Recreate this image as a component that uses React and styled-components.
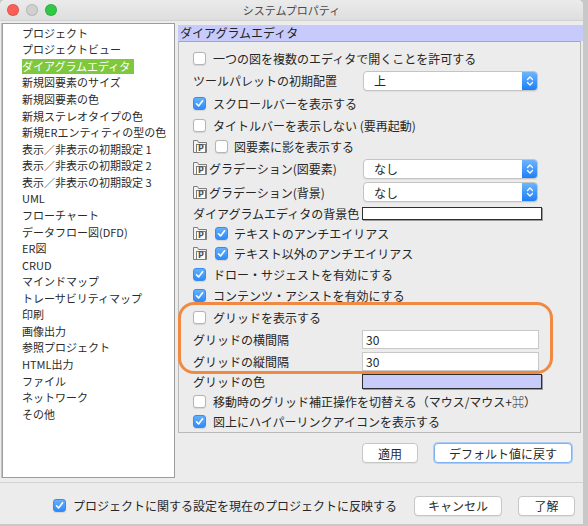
import React from "react";
import styled, { createGlobalStyle } from "styled-components";

const GlobalStyle = createGlobalStyle`
  html, body {
    margin: 0;
    padding: 0;
    background: #c8c8c8;
  }
  body {
    font-family: "Noto Sans CJK JP", "Noto Sans", sans-serif;
    color: #262626;
  }
  * {
    box-sizing: border-box;
  }
`;

const Window = styled.div`
  position: relative;
  width: 583px;
  height: 524px;
  background: #ececec;
  border-radius: 5px 5px 0 0;
  overflow: hidden;
  display: flex;
  flex-direction: column;
  box-shadow: 0 2px 0 #4f4f4f;
`;

const TitleBar = styled.div`
  height: 21px;
  flex: 0 0 auto;
  display: grid;
  grid-template-columns: 1fr auto 1fr;
  align-items: center;
  background: linear-gradient(#ebebeb, #dedede);
  border-bottom: 1px solid #d2d2d2;
`;

const Lights = styled.div`
  display: flex;
  gap: 7px;
  padding-left: 7px;
`;

const Light = styled.span`
  width: 12px;
  height: 12px;
  border-radius: 50%;
  background: ${(p) => p.$color};
  border: 0.5px solid rgba(0, 0, 0, 0.12);
`;

const Title = styled.div`
  font-size: 11px;
  color: #4a4a4a;
  line-height: 1;
`;

const Main = styled.div`
  height: 461px;
  flex: 0 0 auto;
  display: flex;
  gap: 3px;
  padding-left: 2px;
`;

const List = styled.div`
  width: 173px;
  height: 455px;
  margin-top: 2px;
  background: #fff;
  border: 1px solid #9c9c9c;
  box-shadow: -1px 0 0 #c4c4c4;
  padding-top: 1px;
`;

const Item = styled.div`
  height: 16.57px;
  display: flex;
  align-items: center;
  padding-left: 19px;
  font-size: 11px;
  color: #2a2a2a;
`;

const ItemText = styled.span`
  line-height: 15px;
  padding-right: 4px;
  background: ${(p) => (p.$selected ? "#7fc83e" : "transparent")};
  color: ${(p) => (p.$selected ? "#fff" : "inherit")};
`;

const Panel = styled.div`
  flex: 1;
  display: flex;
  flex-direction: column;
  padding-top: 4px;
`;

const PanelHeader = styled.div`
  height: 16px;
  background: #c7cbfb;
  font-size: 12px;
  line-height: 16px;
  padding-left: 2px;
  color: #222;
`;

const Content = styled.div`
  height: 392px;
  margin-right: 2px;
  border: 1px solid #b9b9b9;
  border-top-color: #a8a8a8;
  padding: 6px 0 0 14px;
  display: flex;
  flex-direction: column;
  font-size: 12px;
`;

const Row = styled.div`
  height: ${(p) => p.$h}px;
  display: flex;
  align-items: center;
  gap: ${(p) => p.$gap ?? 7}px;
  white-space: nowrap;
`;

const FieldRow = styled.div`
  height: ${(p) => p.$h}px;
  display: grid;
  grid-template-columns: 169px auto;
  align-items: center;
  white-space: nowrap;
`;

const Lead = styled.div`
  display: flex;
  align-items: center;
  gap: 2px;
`;

const Box = styled.span`
  width: 13px;
  height: 13px;
  flex: 0 0 auto;
  border-radius: 3px;
  display: inline-flex;
  align-items: center;
  justify-content: center;
  background: ${(p) => (p.$on ? "linear-gradient(#62b1fd, #2f8bf8)" : "#fff")};
  border: 1px solid ${(p) => (p.$on ? "#3a8bf0" : "#b5b5b5")};
  box-shadow: 0 0.5px 1px rgba(0, 0, 0, 0.1);
`;

const SelectBox = styled.div`
  width: 175px;
  height: 20px;
  margin-left: 1px;
  display: flex;
  background: #fff;
  border: 1px solid #c4c4c4;
  border-radius: 4px;
  overflow: hidden;
  box-shadow: 0 1px 1px rgba(0, 0, 0, 0.06);
`;

const SelectText = styled.div`
  flex: 1;
  padding-left: 10px;
  font-size: 12px;
  display: flex;
  align-items: center;
`;

const SelectArrow = styled.div`
  width: 15px;
  background: linear-gradient(#6db5fd, #1d7ff7);
  display: flex;
  align-items: center;
  justify-content: center;
`;

const Swatch = styled.div`
  width: 180px;
  height: ${(p) => p.$tall ? 15 : 13}px;
  background: ${(p) => p.$color};
  border: 1px solid #2e2e2e;
  box-shadow: 1px 1px 0 #9a9a9a;
`;

const TextInput = styled.div`
  width: 177px;
  height: 19px;
  background: #fff;
  border: 1px solid #c8c8c8;
  font-size: 12px;
  display: flex;
  align-items: center;
  padding-left: 3px;
`;

const ButtonRow = styled.div`
  display: flex;
  justify-content: flex-end;
  gap: 16px;
  margin-top: 10px;
  padding-right: 11px;
`;

const Button = styled.div`
  width: ${(p) => p.$w}px;
  height: 20px;
  display: flex;
  align-items: center;
  justify-content: center;
  font-size: 12px;
  background: #fff;
  border: 1px solid ${(p) => (p.$focus ? "#80b1f1" : "#c6c6c6")};
  box-shadow: ${(p) => (p.$focus ? "0 0 0 1px #a9cbf6" : "0 1px 0 rgba(0,0,0,0.05)")};
  border-radius: 4px;
  color: #2a2a2a;
`;

const Separator = styled.div`
  border-top: 1px solid #d3d3d3;
`;

const Footer = styled.div`
  flex: 1;
  display: flex;
  align-items: center;
  justify-content: flex-end;
  padding: 4px 8px 0 0;
  font-size: 12px;
`;

const FooterCheck = styled.div`
  display: flex;
  align-items: center;
  gap: 7px;
  margin-right: 17px;
`;

const FooterButtons = styled.div`
  display: flex;
  gap: 16px;
`;

const Highlight = styled.div`
  position: absolute;
  left: 178px;
  top: 302px;
  width: 375px;
  height: 72px;
  border: 3px solid #f08a42;
  border-radius: 16px;
  pointer-events: none;
`;

function Check({ on }) {
  return (
    <Box $on={on}>
      {on && (
        <svg width="9" height="9" viewBox="0 0 9 9">
          <path d="M1.5 4.8 L3.6 7 L7.6 1.8" fill="none" stroke="#fff" strokeWidth="1.6" strokeLinecap="round" strokeLinejoin="round" />
        </svg>
      )}
    </Box>
  );
}

function ProjectIcon() {
  return (
    <svg width="14" height="13" viewBox="0 0 14 13" style={{ flex: "0 0 auto" }}>
      <path d="M0.5 12.5 V0.5 H4.5 L5.5 2.5 H13.5 V12.5 Z" fill="#f4f4f4" stroke="#7c7c7c" />
      <rect x="3.5" y="4.5" width="9" height="8" fill="#fff" stroke="#7c7c7c" />
      <text x="8" y="11.3" textAnchor="middle" fontSize="8" fontWeight="bold" fontFamily="DejaVu Sans, sans-serif" fill="#555">P</text>
    </svg>
  );
}

function Select({ value }) {
  return (
    <SelectBox>
      <SelectText>{value}</SelectText>
      <SelectArrow>
        <svg width="8" height="12" viewBox="0 0 8 12">
          <path d="M1.5 4.5 L4 2 L6.5 4.5 M1.5 7.5 L4 10 L6.5 7.5" fill="none" stroke="#fff" strokeWidth="1.3" strokeLinecap="round" strokeLinejoin="round" />
        </svg>
      </SelectArrow>
    </SelectBox>
  );
}

const categories = [
  "プロジェクト",
  "プロジェクトビュー",
  "ダイアグラムエディタ",
  "新規図要素のサイズ",
  "新規図要素の色",
  "新規ステレオタイプの色",
  "新規ERエンティティの型の色",
  "表示／非表示の初期設定 1",
  "表示／非表示の初期設定 2",
  "表示／非表示の初期設定 3",
  "UML",
  "フローチャート",
  "データフロー図(DFD)",
  "ER図",
  "CRUD",
  "マインドマップ",
  "トレーサビリティマップ",
  "印刷",
  "画像出力",
  "参照プロジェクト",
  "HTML出力",
  "ファイル",
  "ネットワーク",
  "その他",
];

export default function App() {
  return (
    <>
      <GlobalStyle />
      <Window>
        <TitleBar>
          <Lights>
            <Light $color="#fc5f57" />
            <Light $color="#d0d0d0" />
            <Light $color="#33c748" />
          </Lights>
          <Title>システムプロパティ</Title>
          <span />
        </TitleBar>

        <Main>
          <List>
            {categories.map((c) => (
              <Item key={c}>
                <ItemText $selected={c === "ダイアグラムエディタ"}>{c}</ItemText>
              </Item>
            ))}
          </List>

          <Panel>
            <PanelHeader>ダイアグラムエディタ</PanelHeader>
            <Content>
              <Row $h={21}>
                <Check />
                一つの図を複数のエディタで開くことを許可する
              </Row>
              <FieldRow $h={23}>
                <Lead>ツールパレットの初期配置</Lead>
                <Select value="上" />
              </FieldRow>
              <Row $h={22}>
                <Check on />
                スクロールバーを表示する
              </Row>
              <Row $h={22}>
                <Check />
                タイトルバーを表示しない (要再起動)
              </Row>
              <Row $h={21} $gap={8}>
                <ProjectIcon />
                <Row $h={21} $gap={6}>
                  <Check />
                  図要素に影を表示する
                </Row>
              </Row>
              <FieldRow $h={23}>
                <Lead>
                  <ProjectIcon />
                  グラデーション(図要素)
                </Lead>
                <Select value="なし" />
              </FieldRow>
              <FieldRow $h={24}>
                <Lead>
                  <ProjectIcon />
                  グラデーション(背景)
                </Lead>
                <Select value="なし" />
              </FieldRow>
              <FieldRow $h={19}>
                <Lead>ダイアグラムエディタの背景色</Lead>
                <Swatch $color="#ffffff" />
              </FieldRow>
              <Row $h={20} $gap={8}>
                <ProjectIcon />
                <Row $h={20} $gap={6}>
                  <Check on />
                  テキストのアンチエイリアス
                </Row>
              </Row>
              <Row $h={21} $gap={8}>
                <ProjectIcon />
                <Row $h={21} $gap={6}>
                  <Check on />
                  テキスト以外のアンチエイリアス
                </Row>
              </Row>
              <Row $h={21}>
                <Check on />
                ドロー・サジェストを有効にする
              </Row>
              <Row $h={21.5}>
                <Check on />
                コンテンツ・アシストを有効にする
              </Row>
              <Row $h={21.5}>
                <Check />
                グリッドを表示する
              </Row>
              <FieldRow $h={22.5}>
                <Lead>グリッドの横間隔</Lead>
                <TextInput>30</TextInput>
              </FieldRow>
              <FieldRow $h={21}>
                <Lead>グリッドの縦間隔</Lead>
                <TextInput>30</TextInput>
              </FieldRow>
              <FieldRow $h={19.5}>
                <Lead>グリッドの色</Lead>
                <Swatch $color="#c8ccfb" $tall />
              </FieldRow>
              <Row $h={20.5}>
                <Check />
                移動時のグリッド補正操作を切替える（マウス/マウス+⌘）
              </Row>
              <Row $h={20}>
                <Check on />
                図上にハイパーリンクアイコンを表示する
              </Row>
            </Content>
            <ButtonRow>
              <Button $w={56}>適用</Button>
              <Button $w={138} $focus>デフォルト値に戻す</Button>
            </ButtonRow>
          </Panel>
        </Main>

        <Separator />
        <Footer>
          <FooterCheck>
            <Check on />
            プロジェクトに関する設定を現在のプロジェクトに反映する
          </FooterCheck>
          <FooterButtons>
            <Button $w={88}>キャンセル</Button>
            <Button $w={57}>了解</Button>
          </FooterButtons>
        </Footer>

        <Highlight />
      </Window>
    </>
  );
}
